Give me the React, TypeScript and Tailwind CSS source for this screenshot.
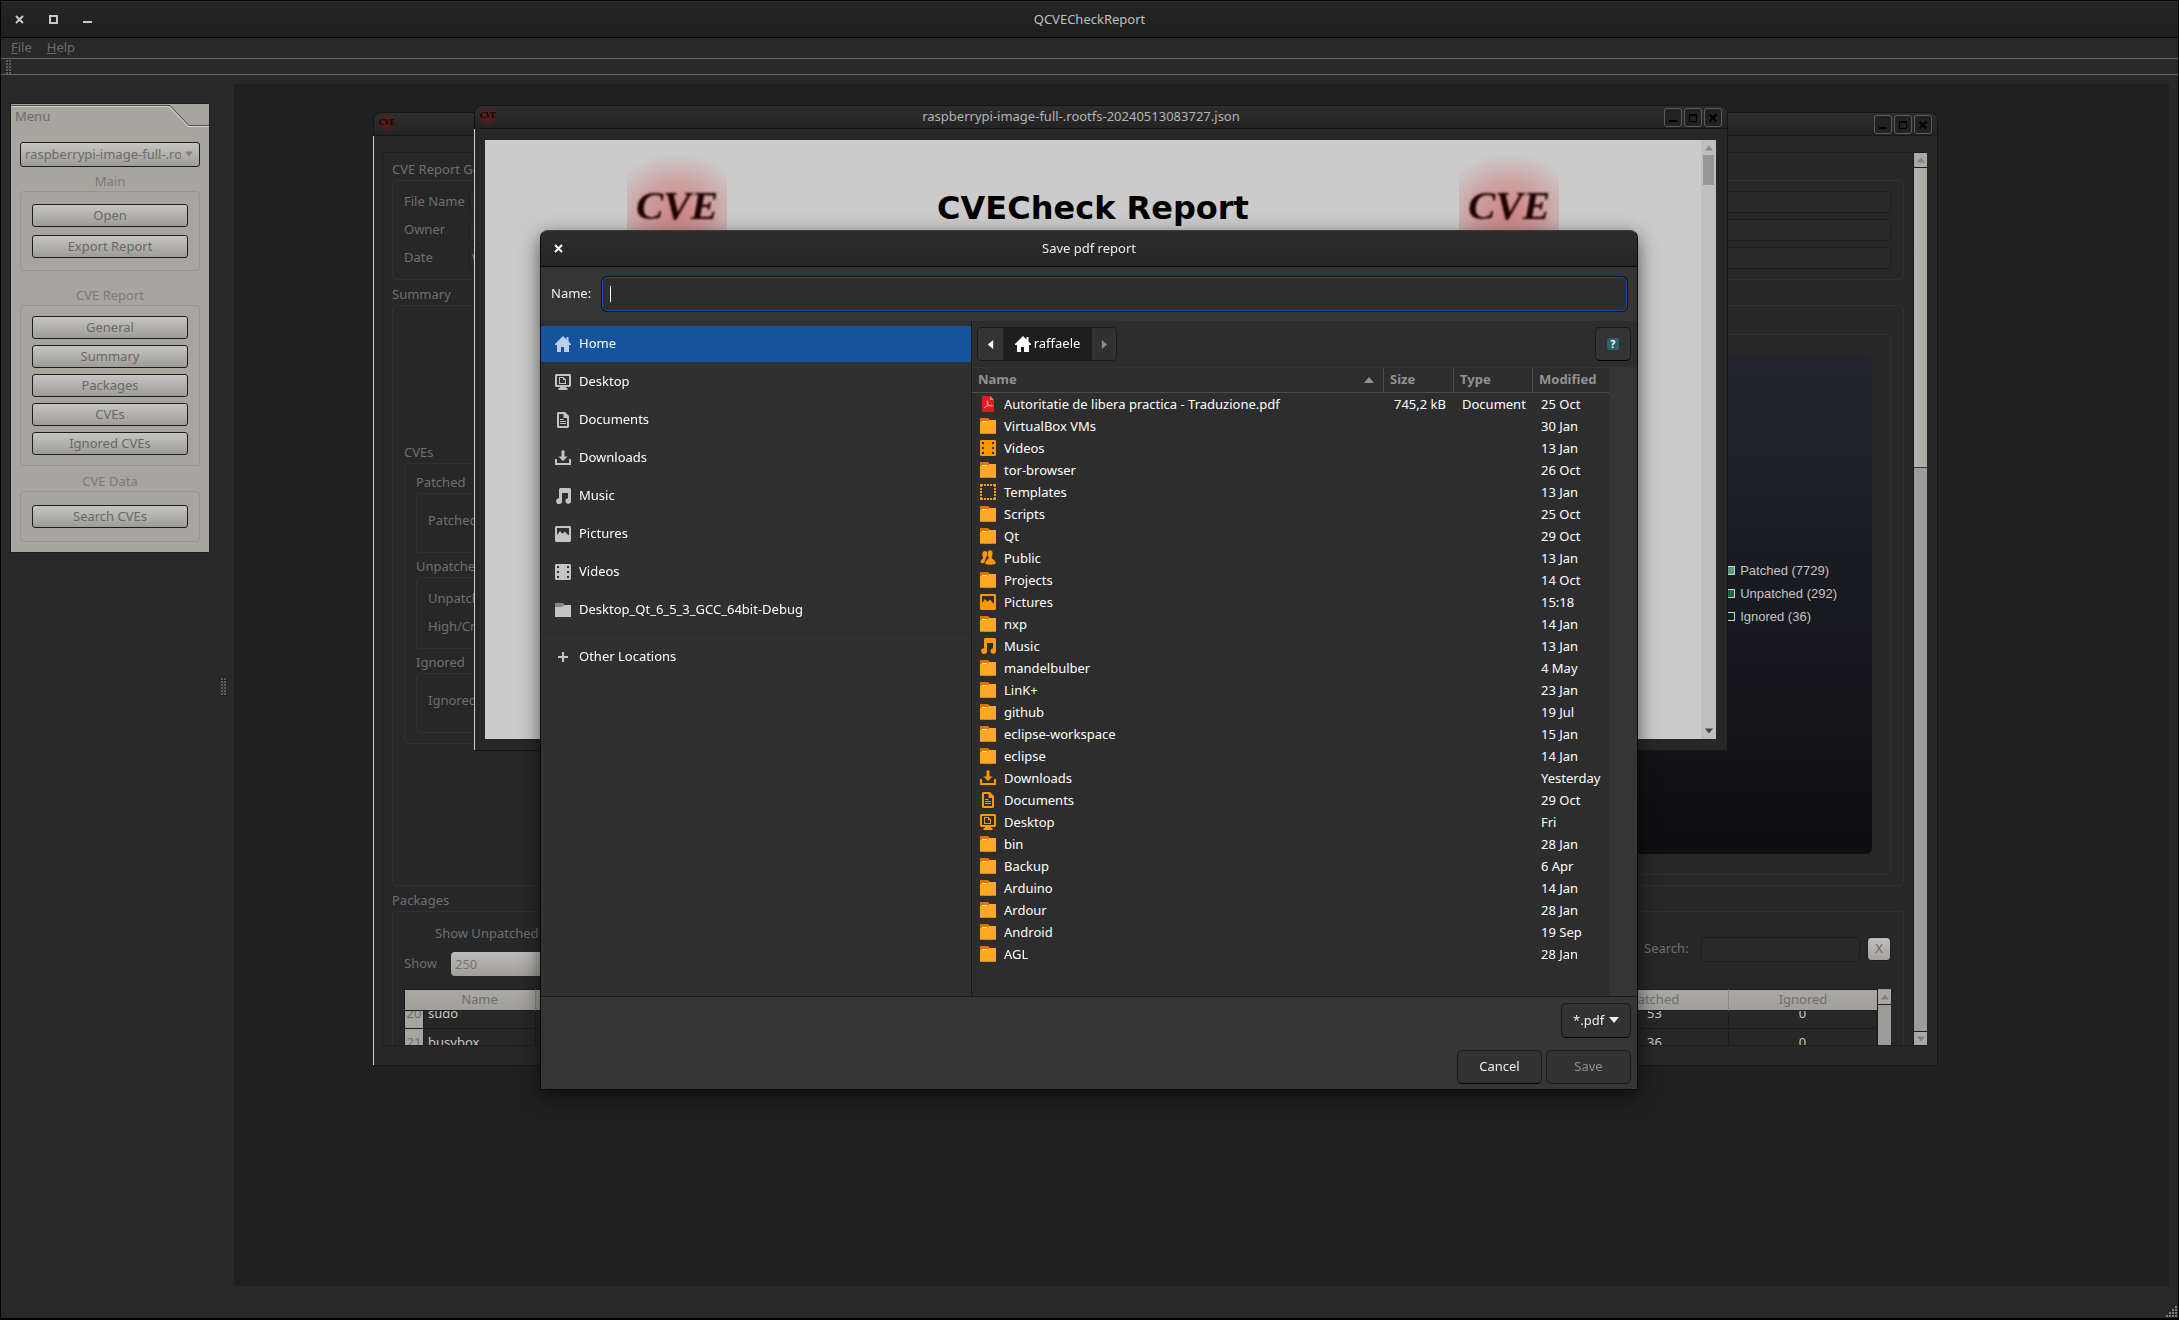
import React, { useCallback } from "react";

/* ---------- icons ---------- */

type IconName =
  | "home"
  | "desktop"
  | "document"
  | "download"
  | "music"
  | "picture"
  | "video"
  | "folderPlain"
  | "plus"
  | "pdf"
  | "folder"
  | "template"
  | "people";

function Icon({ name }: { name: IconName }) {
  return (
    <svg className="h-4 w-4 shrink-0" viewBox="0 0 16 16" fill="currentColor" aria-hidden="true">
      {name === "home" && <path d="M8 0 0 8v1h2v7h4v-5h3v5h5V9h2V8l-2.500-2.500V1h-2v2.500z" />}
      {name === "desktop" && (
        <>
          <path d="M1 0h14l1 1v11l-1 1h-4v1h1.500v2h-9v-2H5v-1H1l-1-1V1zM2 2v9h12V2z" fillRule="evenodd" />
          <path d="M4 3h4.500L11 5.500V10H4zM5 4v5h5V6H8V4z" fillRule="evenodd" />
        </>
      )}
      {name === "document" && (
        <>
          <path d="M3 0h7l4 4v11l-1 1H3l-1-1V1zM4 2v12h8V6H8.500V2z" fillRule="evenodd" />
          <path d="M5 7h3.500v1H5zM5 9h6v1H5zM5 11h6v1H5z" />
        </>
      )}
      {name === "download" && (
        <path d="M6.500 1 8 0l1.500 1v5.500h3L8 11 3.500 6.500h3zM0 9h2v4h12V9h2v6H0z" />
      )}
      {name === "music" && (
        <path d="M5 0h10l1 1v11.500A2.800 2.800 0 1 1 13 10.200V5H7v8A2.900 2.900 0 1 1 4 10.200V1z" />
      )}
      {name === "picture" && (
        <path d="M1 0h14l1 1v14l-1 1H1l-1-1V1zM2 2v7l3-4 2 2.500L8.500 7l1.500-1.500L12 8l2 1.500V2z" fillRule="evenodd" />
      )}
      {name === "video" && (
        <path
          d="M1 0h14l1 1v14l-1 1H1l-1-1V1zM2 2v2h2V2zM12 2v2h2V2zM2 7v2h2V7zM12 7v2h2V7zM2 12v2h2v-2zM12 12v2h2v-2z"
          fillRule="evenodd"
        />
      )}
      {name === "folderPlain" && (
        <>
          <path d="M0 1h8l2 2v2H0z" fill="#868686" />
          <path d="M0 5h7l3-2h6v12H0z" />
        </>
      )}
      {name === "plus" && <path d="M7 3h2v4h4v2H9v4H7V9H3V7h4z" />}
      {name === "pdf" && (
        <>
          <path d="M2 0h8l4 4v12H2z" fill="#e01b1b" />
          <path d="M10 0l4 4h-4z" fill="#ef7b7b" />
          <path d="M4 12c2-1 4-3.500 4-6.500 0-.8-1-.8-1 0C7.200 8 9 10 12 10.200c.6 0 .6-.9 0-.9-3 0-6 .8-8 2.700z" fill="none" stroke="#f3a3a3" strokeWidth=".8" />
        </>
      )}
      {name === "folder" && (
        <>
          <path d="M0 0h8l2 2v3H0z" fill="#ef6c00" />
          <path d="M0 4h7l2-2h7v14H0z" fill="#ffa726" />
          <path d="M2 3h5v1H2z" fill="#fff" />
          <path d="M0 15h16v1H0z" fill="#cf8a26" />
        </>
      )}
      {name === "template" && (
        <path
          d="M0 0h3v2H2v1H0zM4 0h2v2H4zM7 0h2v2H7zM10 0h2v2h-2zM13 0h3v3h-2V2h-1zM0 4h2v2H0zM0 7h2v2H0zM0 10h2v2H0zM14 4h2v2h-2zM14 7h2v2h-2zM14 10h2v2h-2zM0 13h2v1h1v2H0zM4 14h2v2H4zM7 14h2v2H7zM10 14h2v2h-2zM14 13h2v3h-3v-2h1z"
        />
      )}
      {name === "people" && (
        <>
          <path d="M5 1c2 0 2.500 1.500 2.200 3.500C7 6 6 7 6 8c0 1.500-2 2.500-1.500 5H1c-1-1 0-3.500 2-4.500V7C2 5 2 1 5 1z" />
          <path d="M10 0c2.600 0 3.200 2 2.800 4-.2 1.500-.8 2.500-.8 3.500 0 2 4 2 4 6 0 1.500-10 2.500-11 0 0-4 3.500-4 3.500-6C7 6 6.500 0 10 0z" stroke="#2d2d2d" strokeWidth=".6" />
        </>
      )}
    </svg>
  );
}

function Triangle({ dir, className }: { dir: "up" | "down" | "left" | "right"; className: string }) {
  const d = { up: "M0 8 5 2l5 6z", down: "M0 2h10L5 8z", left: "M8 0v10L2 5z", right: "M2 0v10l6-5z" }[dir];
  return (
    <svg viewBox="0 0 10 10" className={className} fill="currentColor" aria-hidden="true">
      <path d={d} />
    </svg>
  );
}

/* ---------- menu dock ---------- */

function MenuGroup({ title, items, className }: { title: string; items: string[]; className: string }) {
  return (
    <section>
      <h2 className="text-center leading-[19px] text-[#7c7b77]">{title}</h2>
      <div className={`flex flex-col rounded-sm border border-[#96958f] px-[11px] ${className}`}>
        {items.map((t) => (
          <button
            key={t}
            className="h-[23px] rounded-[3px] border border-[#1b1e20] bg-linear-to-b from-[#c6c5c1] to-[#9d9c98] leading-[21px] text-[#6a6966]"
          >
            {t}
          </button>
        ))}
      </div>
    </section>
  );
}

function MenuDock() {
  return (
    <aside className="mt-[29px] ml-[10px] w-[198px] self-start bg-[#a7a59d] pb-[10px] outline outline-[#1f1f1f]">
      <div className="flex h-[23px]">
        <div className="mt-px flex-1 border-t border-[#4e4d4b]">
          <h1 className="border-t border-[#cfcdc7] pl-1 leading-[18px] text-[#6d6c69]">Menu</h1>
        </div>
        <svg className="h-[23px] w-[40px]" viewBox="0 0 40 23" fill="none" aria-hidden="true">
          <path d="M0 1.500h1l19 20h20" stroke="#4e4d4b" />
          <path d="M0 2.500 19 22.500h21" stroke="#d6d4ce" />
        </svg>
      </div>
      <div className="flex flex-col px-[9px] pt-[15px]">
        <div className="relative text-[#6d6c69]">
          <select
            aria-label="Report"
            className="h-[25px] w-full appearance-none rounded-[3px] border border-[#1b1e20] bg-linear-to-b from-[#c6c5c1] to-[#9d9c98] pr-[18px] pl-1"
          >
            <option>raspberrypi-image-full-.rootfs-20240513083727.json</option>
          </select>
          <Triangle dir="down" className="pointer-events-none absolute top-2 right-[7px] h-2 w-2 text-[#82817d]" />
        </div>
        <div className="mt-[5px] flex flex-col">
          <MenuGroup title="Main" items={["Open", "Export Report"]} className="gap-2 py-3" />
          <div className="h-[15px]" />
          <MenuGroup
            title="CVE Report"
            items={["General", "Summary", "Packages", "CVEs", "Ignored CVEs"]}
            className="gap-[6px] py-[10px]"
          />
          <div className="h-[6px]" />
          <MenuGroup title="CVE Data" items={["Search CVEs"]} className="py-[13px]" />
        </div>
      </div>
    </aside>
  );
}

/* ---------- mdi windows ---------- */

function MdiButtons() {
  const btn =
    "flex h-[19px] w-[18px] items-center justify-center rounded-[3px] border border-[#5c5c5c] bg-[#222]";
  return (
    <div className="absolute top-[2px] right-[5px] flex gap-[2px]">
      <button className={btn} aria-label="Minimize">
        <svg className="h-[10px] w-[10px]" viewBox="0 0 10 10"><path d="M1 7h8v2H1z" /></svg>
      </button>
      <button className={btn} aria-label="Maximize">
        <svg className="h-[10px] w-[10px]" viewBox="0 0 10 10"><path d="M1 1h8v8H1zM2 3v5h6V3z" fillRule="evenodd" /></svg>
      </button>
      <button className={btn} aria-label="Close">
        <svg className="h-[10px] w-[10px]" viewBox="0 0 10 10"><path d="m1.500 1.500 7 7m0-7-7 7" stroke="#000" strokeWidth="2" /></svg>
      </button>
    </div>
  );
}

function MdiWindow({ title, className, children }: { title?: string; className: string; children: React.ReactNode }) {
  return (
    <section className={`absolute flex flex-col rounded-t-lg border border-[#151515] bg-[#272727] ${className}`}>
      <header className="relative flex h-[23px] shrink-0 items-center justify-center rounded-t-lg border-b border-[#171717] bg-linear-to-b from-[#2d2d2d] to-[#232323] pr-[40px] text-[#b4b4b4]">
        <span className="absolute top-[2px] left-[5px] flex h-4 w-4 items-center justify-center bg-radial from-[#7a1414]/80 to-transparent font-['Liberation_Serif'] text-[8px] font-bold text-black italic">
          CVE
        </span>
        {title}
        <MdiButtons />
      </header>
      <div className="-ml-px flex min-h-0 flex-1 flex-col border-l border-[#d0d0d0]">{children}</div>
    </section>
  );
}

function GroupBox({ title, className, children }: { title: string; className?: string; children?: React.ReactNode }) {
  return (
    <section className="flex flex-col">
      <h3 className="h-[19px] leading-[17px] whitespace-nowrap">{title}</h3>
      <div className={`rounded-sm border border-[#303030] pt-[10px] pr-[12px] pl-[11px] ${className ?? "pb-[10px]"}`}>
        {children}
      </div>
    </section>
  );
}

function Field({ label, value }: { label: string; value?: string }) {
  return (
    <label className="flex h-[22px] items-center">
      <span className="w-[65px]">{label}</span>
      <input readOnly defaultValue={value} className="h-[22px] flex-1 rounded-sm border border-[#1e1e1e] bg-[#292929] px-[2px]" />
    </label>
  );
}

function BevelScroll({ thumb, className }: { thumb: string; className: string }) {
  return (
    <div className={`flex flex-col border-l border-[#1c1c1c] bg-[#9d9c98] text-[#82817d] ${className}`}>
      <div className="flex h-[15px] shrink-0 items-center justify-center border-b border-[#1f1f1f] bg-[#a9a8a2]">
        <Triangle dir="up" className="h-2 w-2" />
      </div>
      <div className={thumb} />
      <div className="flex-1" />
      <div className="flex h-[14px] shrink-0 items-center justify-center border-t border-[#1f1f1f] bg-[#a9a8a2]">
        <Triangle dir="down" className="h-2 w-2" />
      </div>
    </div>
  );
}

function Legend() {
  const items = [
    ["bg-[#5b9a78]", "Patched (7729)"],
    ["bg-[#1d6a3c]", "Unpatched (292)"],
    ["bg-[#0d2618]", "Ignored (36)"],
  ];
  return (
    <ul className="mr-[35px] font-['Liberation_Sans'] text-[13px] text-[#c3c3c3]">
      {items.map(([c, t]) => (
        <li key={t} className="flex h-[23px] items-center gap-[5px]">
          <span className={`h-[9px] w-[9px] border border-[#cfcfcf] ${c}`} />
          {t}
        </li>
      ))}
    </ul>
  );
}

function PackageTable() {
  const scrolled = useCallback((el: HTMLDivElement | null) => {
    if (el) el.scrollTop = 11;
  }, []);
  const rows = [
    ["20", "sudo", "53", "0"],
    ["21", "busybox", "36", "0"],
    ["", "", "", ""],
    ["", "", "", ""],
  ];
  const th = "sticky top-0 z-10 border-y border-[#1c1c1c] bg-linear-to-b from-[#a9a8a3] to-[#a09f9a] font-normal text-[#71706d]";
  const td = "h-[29px] border-r border-b border-[#1d1d1d] p-0 text-[#c8c8c8]";
  return (
    <div className="mt-[13px] flex border-l border-[#1c1c1c]">
      <div ref={scrolled} className="h-[100px] flex-1 overflow-hidden">
        <table className="w-full table-fixed border-separate border-spacing-0 text-[13px]">
          <colgroup>
            <col className="w-[19px]" />
            <col className="w-[112px]" />
            <col />
            <col className="w-[148px]" />
            <col className="w-[148px]" />
          </colgroup>
          <thead>
            <tr className="h-5">
              <th className={th} />
              <th className={`${th} border-r border-r-[#8a8985]`}>Name</th>
              <th className={`${th} border-r border-r-[#8a8985]`} />
              <th className={`${th} border-r border-r-[#8a8985]`}>Patched</th>
              <th className={th}>Ignored</th>
            </tr>
          </thead>
          <tbody>
            {rows.map((r, i) => (
              <tr key={i}>
                <td className="border-r border-b border-[#1d1d1d] bg-[#a5a49e] p-0 text-center text-[#6d6c69]">{r[0]}</td>
                <td className={`${td} pl-1`}>{r[1]}</td>
                <td className={td} />
                <td className={`${td} text-center`}>{r[2]}</td>
                <td className={`${td} text-center`}>{r[3]}</td>
              </tr>
            ))}
          </tbody>
        </table>
      </div>
      <BevelScroll className="w-[14px] pt-px" thumb="h-6" />
    </div>
  );
}

function ReportDataWindow() {
  return (
    <MdiWindow className="top-[28px] left-[139px] h-[954px] w-[1565px]">
      <div className="mt-4 mr-[10px] mb-[19px] ml-2 flex min-h-0 flex-1 border border-r-0 border-[#1e1e1e] text-[#6f6f6f]">
        <div className="flex min-w-0 flex-1 flex-col gap-[6px] overflow-hidden px-[9px] pt-2">
          <GroupBox title="CVE Report General" className="flex flex-col gap-[6px] pb-[10px]">
            <Field label="File Name" />
            <Field label="Owner" />
            <Field label="Date" value="Wed" />
          </GroupBox>
          <GroupBox title="Summary" className="flex items-center gap-[6px] pb-[10px]">
            <div className="w-[300px] pb-[3px]">
              <GroupBox title="CVEs" className="flex flex-col gap-[5px] pb-[10px]">
                <GroupBox title="Patched" className="flex h-[60px] items-center pb-[14px]">Patched</GroupBox>
                <GroupBox title="Unpatched" className="flex flex-col gap-[6px] pb-[10px] leading-[20px]">
                  <p className="h-[22px]">Unpatched</p>
                  <p className="h-[22px]">High/Critical</p>
                </GroupBox>
                <GroupBox title="Ignored" className="flex h-[60px] items-center pb-[14px]">Ignored</GroupBox>
              </GroupBox>
            </div>
            <div className="mt-[18px] h-[541px] flex-1 rounded-sm border border-[#303030] py-5 pr-[18px] pl-5">
              <div className="flex h-full items-center justify-end rounded-md bg-linear-to-b from-[#23242f] via-[#191a20] to-[#0e0d11] pb-[22px]">
                <Legend />
              </div>
            </div>
          </GroupBox>
          <GroupBox title="Packages">
            <div className="flex items-center">
              <div className="flex flex-1 flex-col gap-[7px]">
                <p className="pl-[31px] leading-[23px]">Show Unpatched CVEs</p>
                <label className="flex items-center">
                  <span className="w-[47px]">Show</span>
                  <input
                    readOnly
                    defaultValue="250"
                    className="h-[24px] w-[140px] rounded-sm bg-linear-to-b from-[#bebbb8] to-[#9f9e9a] px-1 text-[#74736f]"
                  />
                </label>
              </div>
              <div className="mr-[6px] h-[22px] w-[120px] rounded-sm border border-[#1e1e1e]" />
              <label className="flex items-center">
                <span className="w-[57px]">Search:</span>
                <input className="h-[25px] w-[159px] rounded-sm border border-[#1e1e1e] bg-[#292929] px-1" />
              </label>
              <button className="ml-[7px] h-[24px] w-[24px] rounded-sm border border-[#1e1e1e] bg-linear-to-b from-[#c0bfbb] to-[#a3a29e] text-[#6a6966]">
                X
              </button>
            </div>
            <PackageTable />
          </GroupBox>
        </div>
        <BevelScroll className="w-[14px]" thumb="h-[300px] border-b border-[#3a3a3a] bg-linear-to-r from-[#b5b3ad] to-[#a9a7a0]" />
      </div>
    </MdiWindow>
  );
}

function CveLogo() {
  return (
    <div className="flex h-[100px] w-[100px] items-center justify-center bg-[radial-gradient(72px_62px_at_50%_60%,#cf8484,#cd9f9f_50%,#cbcbcb)]">
      <span className="font-['Liberation_Serif'] text-[41px] leading-none font-bold text-[#1c0000] italic blur-[1px]">CVE</span>
    </div>
  );
}

function ReportWindow() {
  return (
    <MdiWindow
      title="raspberrypi-image-full-.rootfs-20240513083727.json"
      className="top-[21px] left-[240px] h-[646px] w-[1254px]"
    >
      <div className="mt-[11px] mr-[11px] mb-[11px] ml-[10px] flex min-h-0 flex-1 bg-[#cbcbcb]">
        <div className="flex flex-1 items-start justify-between px-[142px] pt-[15px]">
          <CveLogo />
          <h2 className="font-['DejaVu_Sans'] text-[32px] leading-[107px] font-bold text-black">CVECheck Report</h2>
          <CveLogo />
        </div>
        <div className="flex w-[15px] flex-col items-center bg-[#bfbfbf] py-1">
          <Triangle dir="up" className="h-2 w-2 text-[#8a8a8a]" />
          <div className="mt-[3px] h-[30px] w-[11px] bg-[#989898]" />
          <div className="flex-1" />
          <Triangle dir="down" className="h-2 w-2 text-[#444]" />
        </div>
      </div>
    </MdiWindow>
  );
}

/* ---------- save dialog ---------- */

const places: [IconName, string][] = [
  ["home", "Home"],
  ["desktop", "Desktop"],
  ["document", "Documents"],
  ["download", "Downloads"],
  ["music", "Music"],
  ["picture", "Pictures"],
  ["video", "Videos"],
  ["folderPlain", "Desktop_Qt_6_5_3_GCC_64bit-Debug"],
];

const files: [IconName, string, string, string, string][] = [
  ["pdf", "Autoritatie de libera practica - Traduzione.pdf", "745,2 kB", "Document", "25 Oct"],
  ["folder", "VirtualBox VMs", "", "", "30 Jan"],
  ["video", "Videos", "", "", "13 Jan"],
  ["folder", "tor-browser", "", "", "26 Oct"],
  ["template", "Templates", "", "", "13 Jan"],
  ["folder", "Scripts", "", "", "25 Oct"],
  ["folder", "Qt", "", "", "29 Oct"],
  ["people", "Public", "", "", "13 Jan"],
  ["folder", "Projects", "", "", "14 Oct"],
  ["picture", "Pictures", "", "", "15:18"],
  ["folder", "nxp", "", "", "14 Jan"],
  ["music", "Music", "", "", "13 Jan"],
  ["folder", "mandelbulber", "", "", "4 May"],
  ["folder", "LinK+", "", "", "23 Jan"],
  ["folder", "github", "", "", "19 Jul"],
  ["folder", "eclipse-workspace", "", "", "15 Jan"],
  ["folder", "eclipse", "", "", "14 Jan"],
  ["download", "Downloads", "", "", "Yesterday"],
  ["document", "Documents", "", "", "29 Oct"],
  ["desktop", "Desktop", "", "", "Fri"],
  ["folder", "bin", "", "", "28 Jan"],
  ["folder", "Backup", "", "", "6 Apr"],
  ["folder", "Arduino", "", "", "14 Jan"],
  ["folder", "Ardour", "", "", "28 Jan"],
  ["folder", "Android", "", "", "19 Sep"],
  ["folder", "AGL", "", "", "28 Jan"],
];

function PlacesSidebar() {
  return (
    <nav className="w-[430px] shrink-0 bg-[#303030] pt-[5px]">
      <ul className="flex flex-col gap-[2px]">
        {places.map(([icon, label], i) => (
          <li key={label}>
            <button
              className={`flex h-9 w-full items-center gap-2 pl-[14px] ${
                i === 0 ? "bg-[#15539e] text-[#bcd0ea]" : "text-[#c4c4c4]"
              }`}
            >
              <Icon name={icon} />
              <span className="text-white">{label}</span>
            </button>
          </li>
        ))}
      </ul>
      <div className="my-[5px] h-px bg-[#2a2a2a]" />
      <button className="flex h-9 w-full items-center gap-2 pl-[14px] text-[#c4c4c4]">
        <Icon name="plus" />
        <span className="text-white">Other Locations</span>
      </button>
    </nav>
  );
}

function PathBar() {
  return (
    <div className="flex h-[47px] items-center justify-between border-b border-[#343434] pr-[6px] pl-[5px]">
      <div className="flex h-[34px] overflow-hidden rounded-[5px] border border-[#1a1a1a]">
        <button aria-label="Back" className="flex w-[25px] items-center justify-center bg-[#333] text-white">
          <Triangle dir="left" className="h-[9px] w-[9px]" />
        </button>
        <button className="flex w-[89px] items-center justify-center gap-[3px] bg-[#1e1e1e] text-white">
          <Icon name="home" />
          raffaele
        </button>
        <button aria-label="Forward" className="flex w-[24px] items-center justify-center bg-[#313131] text-[#8a8a8a]">
          <Triangle dir="right" className="h-[9px] w-[9px]" />
        </button>
      </div>
      <button
        aria-label="Create folder"
        className="flex h-[34px] w-9 items-center justify-center rounded-[5px] border border-[#1a1a1a] border-b-black bg-[#333]"
      >
        <span className="flex h-3 w-3 items-center justify-center rounded-[2px] bg-[#2f5f6c] text-[10px] leading-none font-bold text-white">
          ?
        </span>
      </button>
    </div>
  );
}

function FileTable() {
  const th = "border-b border-[#4d4d4d] p-0 pl-[6px] text-left text-[13px] font-bold text-[#929291]";
  return (
    <table className="w-full table-fixed border-separate border-spacing-0 whitespace-nowrap text-white">
      <colgroup>
        <col />
        <col className="w-[70px]" />
        <col className="w-[79px]" />
        <col className="w-[76px]" />
      </colgroup>
      <thead>
        <tr className="h-[25px]">
          <th className={`${th} border-r`}>
            <span className="flex items-center justify-between pr-[9px]">
              Name
              <Triangle dir="up" className="h-[10px] w-[10px]" />
            </span>
          </th>
          <th className={`${th} border-r`}>Size</th>
          <th className={`${th} border-r`}>Type</th>
          <th className={th}>Modified</th>
        </tr>
      </thead>
      <tbody>
        {files.map(([icon, name, size, type, modified]) => (
          <tr key={name} className="h-[22px] leading-[20px]">
            <td className="p-0 pl-2">
              <span className="flex items-center gap-2 text-[#ff9800]">
                <Icon name={icon} />
                <span className="text-white">{name}</span>
              </span>
            </td>
            <td className="p-0 pr-2 text-right">{size}</td>
            <td className="p-0 pl-2">{type}</td>
            <td className="p-0 pl-2">{modified}</td>
          </tr>
        ))}
      </tbody>
    </table>
  );
}

function SaveDialog() {
  const action = "h-[34px] w-[85px] rounded-[5px] border border-[#1b1b1b] bg-[#323232]";
  return (
    <div className="absolute inset-y-0 right-px left-0 z-20 flex items-start justify-center pt-[229px]">
      <div
        role="dialog"
        aria-label="Save pdf report"
        className="flex w-[1098px] flex-col rounded-t-lg border border-t-[#3c3c3c] border-[#0b0b0b] bg-[#353535] text-[#eeeeec] shadow-[0_6px_20px_rgba(0,0,0,0.6)]"
      >
        <header className="relative flex h-9 items-center justify-center rounded-t-lg border-b border-[#080808] bg-linear-to-b from-[#2d2d2d] to-[#262626]">
          <button aria-label="Close" className="absolute left-[13px]">
            <svg className="h-[9px] w-[9px]" viewBox="0 0 9 9">
              <path d="m1 1 7 7m0-7-7 7" stroke="#fff" strokeWidth="2" />
            </svg>
          </button>
          Save pdf report
        </header>
        <label className="flex items-center px-[10px] py-[10px]">
          <span className="w-[51px]">Name:</span>
          <span className="relative flex flex-1 items-center">
            <input className="h-[34px] w-full rounded-[5px] border border-[#15539e] bg-[#2d2d2d] px-2 caret-transparent ring-1 ring-[#0a1422] outline-none" />
            <span className="absolute left-[8px] h-4 w-px bg-white" />
          </span>
        </label>
        <div className="flex h-[675px]">
          <PlacesSidebar />
          <div className="flex min-w-0 flex-1 flex-col border-l border-[#1b1b1b] bg-[#2d2d2d]">
            <PathBar />
            <div className="min-h-0 flex-1 bg-[#353535] pr-[28px]">
              <div className="h-full bg-[#2d2d2d]">
                <FileTable />
              </div>
            </div>
          </div>
        </div>
        <footer className="flex flex-col items-end gap-3 border-t border-[#1b1b1b] px-[6px] pt-[6px] pb-[5px]">
          <div className="relative">
            <select
              aria-label="File type"
              className="h-[35px] w-[70px] appearance-none rounded-[5px] border border-[#1b1b1b] border-b-black bg-[#323232] pl-[11px]"
            >
              <option>*.pdf</option>
            </select>
            <Triangle dir="down" className="pointer-events-none absolute top-3 right-3 h-[10px] w-[10px]" />
          </div>
          <div className="flex gap-1">
            <button className={`${action} border-b-black`}>Cancel</button>
            <button className={`${action} text-[#8d8d8c]`} disabled>
              Save
            </button>
          </div>
        </footer>
      </div>
    </div>
  );
}

/* ---------- application ---------- */

function ResizeGrip() {
  const dots = [];
  for (let r = 0; r < 4; r++) for (let c = 3 - r; c < 4; c++) dots.push([c * 3, r * 3]);
  return (
    <svg className="h-3 w-3" viewBox="0 0 12 12" fill="#7a7a7a" aria-hidden="true">
      {dots.map(([x, y]) => (
        <rect key={`${x}-${y}`} x={x} y={y} width="2" height="2" />
      ))}
    </svg>
  );
}

function DotHandle({ rows }: { rows: number }) {
  return (
    <div className="flex flex-col gap-px">
      {Array.from({ length: rows }, (_, i) => (
        <div key={i} className="flex gap-px">
          <span className="h-[2px] w-[2px] bg-[#5c5c5c]" />
          <span className="h-[2px] w-[2px] bg-[#5c5c5c]" />
        </div>
      ))}
    </div>
  );
}

export default function App() {
  return (
    <div className="relative flex min-h-screen flex-col overflow-hidden border-x border-t border-b-2 border-black bg-[#282828] font-['Noto_Sans',sans-serif] text-[13px]">
      <header className="relative flex h-[37px] items-center justify-center border-t border-b border-t-[#333] border-b-black bg-linear-to-b from-[#252525] to-[#1e1e1e] text-[#c0c0c0]">
        <div className="absolute left-[14px] flex gap-[25px]">
          <button aria-label="Close">
            <svg className="h-[9px] w-[9px]" viewBox="0 0 9 9"><path d="m1 1 7 7m0-7-7 7" stroke="#c8c8c8" strokeWidth="2" /></svg>
          </button>
          <button aria-label="Maximize">
            <svg className="h-[9px] w-[9px]" viewBox="0 0 9 9"><path d="M1 1h7v7H1z" fill="none" stroke="#c8c8c8" strokeWidth="2" /></svg>
          </button>
          <button aria-label="Minimize">
            <svg className="h-[9px] w-[9px]" viewBox="0 0 9 9"><path d="M0 6h9v2H0z" fill="#c8c8c8" /></svg>
          </button>
        </div>
        QCVECheckReport
      </header>
      <nav className="flex h-5 items-start gap-[15px] pl-[10px] leading-[18px] text-[#6b6b6b]">
        <button><u>F</u>ile</button>
        <button><u>H</u>elp</button>
      </nav>
      <div className="flex h-[17px] items-center border-y border-[#666] pl-[5px]">
        <DotHandle rows={5} />
      </div>
      <div className="flex flex-1">
        <MenuDock />
        <div className="flex w-[25px] items-center justify-center pt-3 pl-1">
          <DotHandle rows={6} />
        </div>
        <main className="relative isolate mt-[9px] mr-[9px] flex-1 overflow-hidden bg-[#202020]">
          <ReportDataWindow />
          <ReportWindow />
        </main>
      </div>
      <footer className="flex h-8 items-end justify-end">
        <ResizeGrip />
      </footer>
      <SaveDialog />
    </div>
  );
}
